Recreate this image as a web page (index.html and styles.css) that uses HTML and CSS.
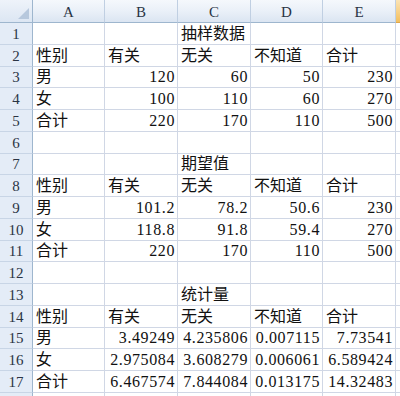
FILE: index.html
```html
<!DOCTYPE html>
<html lang="zh">
<head>
<meta charset="utf-8">
<title>Sheet</title>
<link rel="stylesheet" href="styles.css">
</head>
<body>
<div class="sheet">
  <div class="corner"></div>
  <div class="ch">A</div><div class="ch">B</div><div class="ch">C</div><div class="ch">D</div><div class="ch">E</div><div class="ch hot"></div>

  <div class="rh">1</div><div class="c"></div><div class="c"></div><div class="c">抽样数据</div><div class="c"></div><div class="c"></div><div class="c f"></div>
  <div class="rh">2</div><div class="c">性别</div><div class="c">有关</div><div class="c">无关</div><div class="c">不知道</div><div class="c">合计</div><div class="c f"></div>
  <div class="rh">3</div><div class="c">男</div><div class="c n">120</div><div class="c n">60</div><div class="c n">50</div><div class="c n">230</div><div class="c f"></div>
  <div class="rh">4</div><div class="c">女</div><div class="c n">100</div><div class="c n">110</div><div class="c n">60</div><div class="c n">270</div><div class="c f"></div>
  <div class="rh">5</div><div class="c">合计</div><div class="c n">220</div><div class="c n">170</div><div class="c n">110</div><div class="c n">500</div><div class="c f"></div>
  <div class="rh">6</div><div class="c"></div><div class="c"></div><div class="c"></div><div class="c"></div><div class="c"></div><div class="c f"></div>
  <div class="rh">7</div><div class="c"></div><div class="c"></div><div class="c">期望值</div><div class="c"></div><div class="c"></div><div class="c f"></div>
  <div class="rh">8</div><div class="c">性别</div><div class="c">有关</div><div class="c">无关</div><div class="c">不知道</div><div class="c">合计</div><div class="c f"></div>
  <div class="rh">9</div><div class="c">男</div><div class="c n">101.2</div><div class="c n">78.2</div><div class="c n">50.6</div><div class="c n">230</div><div class="c f"></div>
  <div class="rh">10</div><div class="c">女</div><div class="c n">118.8</div><div class="c n">91.8</div><div class="c n">59.4</div><div class="c n">270</div><div class="c f"></div>
  <div class="rh">11</div><div class="c">合计</div><div class="c n">220</div><div class="c n">170</div><div class="c n">110</div><div class="c n">500</div><div class="c f"></div>
  <div class="rh">12</div><div class="c"></div><div class="c"></div><div class="c"></div><div class="c"></div><div class="c"></div><div class="c f"></div>
  <div class="rh">13</div><div class="c"></div><div class="c"></div><div class="c">统计量</div><div class="c"></div><div class="c"></div><div class="c f"></div>
  <div class="rh">14</div><div class="c">性别</div><div class="c">有关</div><div class="c">无关</div><div class="c">不知道</div><div class="c">合计</div><div class="c f"></div>
  <div class="rh">15</div><div class="c">男</div><div class="c n">3.49249</div><div class="c n">4.235806</div><div class="c n">0.007115</div><div class="c n">7.73541</div><div class="c f"></div>
  <div class="rh">16</div><div class="c">女</div><div class="c n">2.975084</div><div class="c n">3.608279</div><div class="c n">0.006061</div><div class="c n">6.589424</div><div class="c f"></div>
  <div class="rh">17</div><div class="c">合计</div><div class="c n">6.467574</div><div class="c n">7.844084</div><div class="c n">0.013175</div><div class="c n">14.32483</div><div class="c f"></div>
  <div class="rh"></div><div class="c"></div><div class="c"></div><div class="c"></div><div class="c"></div><div class="c"></div><div class="c f"></div>
</div>
</body>
</html>
```

FILE: styles.css
```css
html, body {
  margin: 0;
  padding: 0;
  background: #ffffff;
  overflow: hidden;
  width: 400px;
  height: 396px;
}

.sheet {
  display: grid;
  grid-template-columns: 33px 72px 73px 73px 72px 73px 4px;
  grid-template-rows: 23px repeat(18, 21.75px);
  font-family: "Liberation Serif", "Noto Sans CJK SC", serif;
  font-size: 16px;
  color: #111111;
}

.corner {
  position: relative;
  background: linear-gradient(#eef3fa, #dce6f3);
  border-right: 1px solid #9eb6ce;
  border-bottom: 1px solid #9eb6ce;
}

.corner::after {
  content: "";
  position: absolute;
  right: 3px;
  bottom: 3px;
  width: 0;
  height: 0;
  border-left: 11px solid transparent;
  border-bottom: 11px solid #b7c8dd;
}

.ch {
  display: flex;
  align-items: center;
  justify-content: center;
  background: linear-gradient(#f5f8fc 0%, #eaf0f8 50%, #dbe5f2 100%);
  border-right: 1px solid #c0cfe2;
  border-bottom: 1px solid #9eb6ce;
  color: #2a3444;
  font-size: 15px;
  line-height: 18px;
  padding-top: 1px;
}

.ch.hot {
  background: linear-gradient(#fbe3b4 0%, #f8d28a 50%, #f3bf5e 100%);
  border-right: none;
  border-bottom-color: #e0a64a;
}

.rh {
  display: flex;
  align-items: flex-end;
  justify-content: center;
  background: #e4ecf7;
  border-right: 1px solid #9eb6ce;
  border-bottom: 1px solid #c8d5e6;
  color: #2a3444;
  font-size: 15px;
  line-height: 18px;
  padding-bottom: 1px;
}

.c {
  display: flex;
  align-items: flex-end;
  justify-content: flex-start;
  border-right: 1px solid #d0d7e5;
  border-bottom: 1px solid #d0d7e5;
  padding: 0 3px 1px 3px;
  line-height: 18px;
  white-space: nowrap;
  overflow: visible;
  min-width: 0;
}

.c.n {
  justify-content: flex-end;
  letter-spacing: 0.6px;
  padding-right: 2px;
}

.c.f {
  border-right: none;
  padding: 0;
}
```
